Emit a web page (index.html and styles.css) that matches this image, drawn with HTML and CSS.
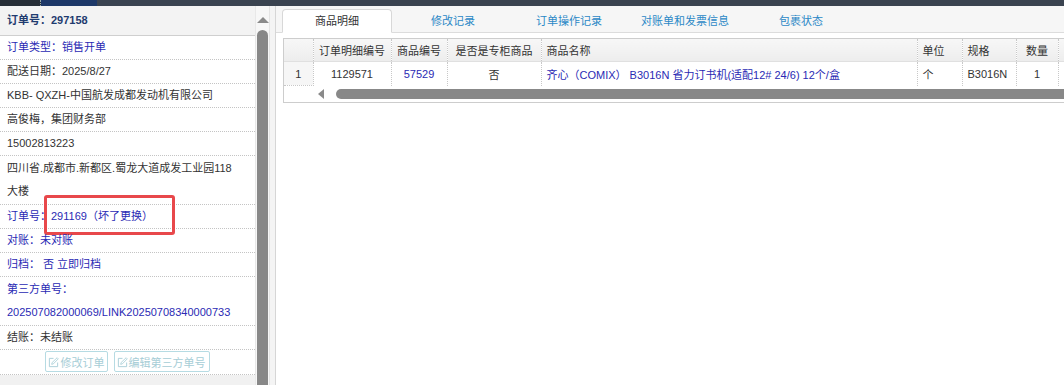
FILE: index.html
```html
<!DOCTYPE html>
<html lang="zh-CN">
<head>
  <meta charset="UTF-8">
  <title>订单详情</title>
  <link rel="stylesheet" href="styles.css">
</head>
<body>
  <div class="topbar"><span class="tb-dark"></span><span class="tb-navy"></span></div>

  <div class="layout">
    <div class="side">
      <div class="side-body">
        <div class="side-head">订单号：297158</div>
        <div class="row blue">订单类型：销售开单</div>
        <div class="row">配送日期：2025/8/27</div>
        <div class="row">KBB- QXZH-中国航发成都发动机有限公司</div>
        <div class="row">高俊梅，集团财务部</div>
        <div class="row">15002813223</div>
        <div class="row wrap">四川省.成都市.新都区.蜀龙大道成发工业园118大楼</div>
        <div class="row blue mark-row">订单号：<a class="link" href="#">291169（坏了更换）</a><span class="mark"></span></div>
        <div class="row blue">对账：未对账</div>
        <div class="row blue">归档：&nbsp;否 立即归档</div>
        <div class="row blue wrap">第三方单号：<a class="link" href="#">202507082000069/LINK20250708340000733</a></div>
        <div class="row">结账：未结账</div>
        <div class="row btns">
          <button class="btn" disabled>
            <svg class="ico" viewBox="0 0 12 12"><path d="M6 1.5H1.5v9h9V6" fill="none" stroke="currentColor"/><path d="M4 8l.5-2L10 .8l1.2 1.2L5.8 7.5z" fill="none" stroke="currentColor" stroke-width=".9"/></svg>修改订单
          </button>
          <button class="btn" disabled>
            <svg class="ico" viewBox="0 0 12 12"><path d="M6 1.5H1.5v9h9V6" fill="none" stroke="currentColor"/><path d="M4 8l.5-2L10 .8l1.2 1.2L5.8 7.5z" fill="none" stroke="currentColor" stroke-width=".9"/></svg>编辑第三方单号
          </button>
        </div>
        <div class="side-foot"></div>
      </div>
      <div class="vscroll"><span class="vs-up"></span><span class="vs-thumb"></span></div>
    </div>

    <div class="splitter"></div>

    <div class="main">
      <div class="tabs">
        <span class="tab active">商品明细</span>
        <span class="tab">修改记录</span>
        <span class="tab">订单操作记录</span>
        <span class="tab">对账单和发票信息</span>
        <span class="tab">包裹状态</span>
      </div>

      <div class="grid">
        <table>
          <colgroup>
            <col class="c-rn"><col class="c-id"><col class="c-code"><col class="c-flag">
            <col class="c-name"><col class="c-unit"><col class="c-spec"><col class="c-qty"><col class="c-more">
          </colgroup>
          <thead>
            <tr>
              <th class="rn"></th>
              <th>订单明细编号</th>
              <th>商品编号</th>
              <th>是否是专柜商品</th>
              <th class="left">商品名称</th>
              <th class="left">单位</th>
              <th class="left">规格</th>
              <th>数量</th>
              <th></th>
            </tr>
          </thead>
          <tbody>
            <tr>
              <td class="rn">1</td>
              <td>1129571</td>
              <td class="link">57529</td>
              <td>否</td>
              <td class="left link">齐心（COMIX） B3016N 省力订书机(适配12# 24/6) 12个/盒</td>
              <td class="left">个</td>
              <td class="left">B3016N</td>
              <td>1</td>
              <td></td>
            </tr>
          </tbody>
        </table>
        <div class="hscroll"><span class="hs-left"></span><span class="hs-thumb"></span></div>
      </div>
    </div>
  </div>
</body>
</html>
```

FILE: styles.css
```css
html, body {
  margin: 0;
  height: 100%;
  overflow: hidden;
}
body {
  font-family: "Liberation Sans", "Noto Sans CJK SC", sans-serif;
  font-size: 11px;
  color: #333;
  background: #fff;
}
.topbar {
  height: 6px;
  display: flex;
  background: #3a4350;
}
.tb-dark {
  width: 40px;
  background: #262d36;
  border-right: 1px dotted #9aa;
}
.tb-navy {
  width: 56px;
  background: #1d3868;
}
.layout {
  display: flex;
  height: calc(100% - 6px);
}

/* left panel */
.side {
  display: flex;
  width: 269px;
}
.side-body {
  width: 255px;
  border-right: 1px solid #e8e8e8;
}
.side-head {
  height: 29px;
  line-height: 29px;
  padding-left: 7px;
  background: #f3f3f3;
  border-bottom: 1px solid #cfcfcf;
  font-weight: bold;
  color: #1f3b6f;
}
.row {
  position: relative;
  line-height: 23px;
  padding: 0 16px 0 7px;
  border-bottom: 1px dotted #c4c4c4;
}
.row.wrap {
  padding-top: 1px;
  padding-bottom: 1px;
}
.blue, .link {
  color: #2a2ab4;
  text-decoration: none;
}
.mark {
  position: absolute;
  left: 44px;
  top: -10px;
  width: 125px;
  height: 34px;
  border: 3px solid #e8484b;
  border-radius: 3px;
}
.btns {
  text-align: center;
  line-height: normal;
  padding: 1px 0 2px;
}
.btn {
  height: 21px;
  padding: 0 3px 0 2px;
  margin: 0 1px;
  font: inherit;
  color: #a6cdd6;
  background: #fff;
  border: 1px solid #b6dbe3;
  border-radius: 2px;
  vertical-align: top;
}
.ico {
  width: 11px;
  height: 11px;
  margin-right: 1px;
  vertical-align: -1px;
}
.side-foot {
  height: 12px;
  background: #f1f1f1;
}
.vscroll {
  width: 13px;
  display: flex;
  flex-direction: column;
  align-items: center;
  background: #f7f7f7;
}
.vs-up {
  margin-top: 11px;
  width: 0;
  height: 0;
  border-left: 6px solid transparent;
  border-right: 6px solid transparent;
  border-bottom: 6px solid #8a8a8a;
}
.vs-thumb {
  margin-top: 7px;
  width: 11px;
  flex: 1;
  background: #888;
  border-radius: 6px 6px 0 0;
}
.splitter {
  width: 5px;
  background: #f4f4f4;
  border-left: 1px solid #e4e4e4;
  border-right: 1px solid #d6d6d6;
}

/* right panel */
.main {
  flex: 1;
  min-width: 0;
  overflow: hidden;
}
.tabs {
  display: flex;
  gap: 6px;
  padding: 3px 0 0 6px;
  height: 23px;
  background: #f6f6f6;
  border-bottom: 1px solid #dcdcdc;
}
.tab {
  width: 110px;
  height: 24px;
  line-height: 22px;
  text-align: center;
  color: #2b88c6;
  border: 1px solid transparent;
  box-sizing: border-box;
}
.tab.active {
  color: #333;
  background: #fff;
  border-color: #d8d8d8;
  border-bottom-color: #fff;
  border-radius: 4px 4px 0 0;
}
.grid {
  margin: 5px -20px 0 7px;
  border: 1px solid #cdcdcd;
}
table {
  border-collapse: collapse;
  table-layout: fixed;
  width: 800px;
}
.c-rn { width: 29px; }
.c-id { width: 78px; }
.c-code { width: 56px; }
.c-flag { width: 94px; }
.c-name { width: 376px; }
.c-unit { width: 45px; }
.c-spec { width: 54px; }
.c-qty { width: 42px; }
.c-more { width: 26px; }
th, td {
  padding: 0 5px;
  text-align: center;
  white-space: nowrap;
  overflow: hidden;
  border-right: 1px dotted #c8c8c8;
}
th {
  height: 22px;
  font-weight: normal;
  background: linear-gradient(#f7f7f7, #ededed);
  border-bottom: 1px solid #e0e0e0;
}
td {
  height: 23px;
}
.left {
  text-align: left;
}
td.rn {
  background: #f6f6f6;
  border-bottom: 1px dotted #c8c8c8;
}
.hscroll {
  display: flex;
  align-items: center;
  height: 16px;
  padding-left: 34px;
}
.hs-left {
  width: 0;
  height: 0;
  border-top: 5px solid transparent;
  border-bottom: 5px solid transparent;
  border-right: 6px solid #8a8a8a;
}
.hs-thumb {
  flex: 1;
  height: 10px;
  margin-left: 12px;
  background: #888;
  border-radius: 5px 0 0 5px;
}
```
